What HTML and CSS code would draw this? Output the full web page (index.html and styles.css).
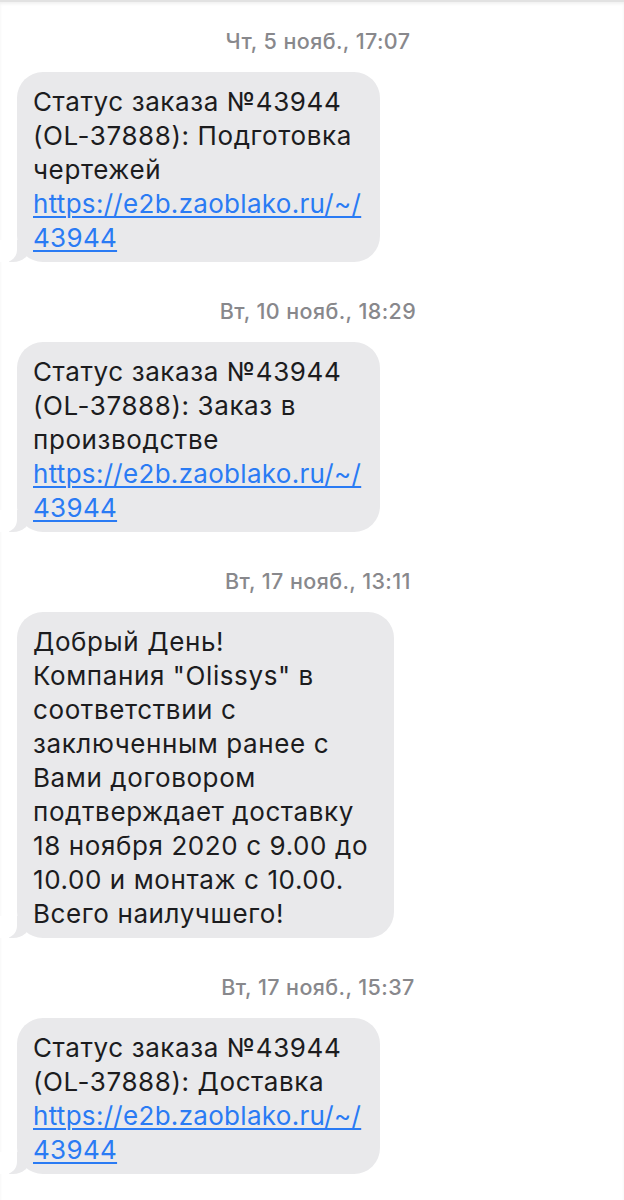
FILE: index.html
```html
<!DOCTYPE html>
<html lang='ru'>
<head>
  <meta charset='utf-8'>
  <title>Сообщения</title>

  <link rel="stylesheet" href="styles.css">
</head>
<body>
  <div id='thread'>
    <!-- 5 ноября -->
    <div class='stamp'>Чт, 5 нояб., 17:07</div>
    <div class='bubble'>
      Статус заказа №43944 (OL-37888): Подготовка чертежей
      <a href='#'>https://e2b.zaoblako.ru/~/ 43944</a>
    </div>

    <!-- 10 ноября -->
    <div class='stamp'>Вт, 10 нояб., 18:29</div>
    <div class='bubble'>
      Статус заказа №43944 (OL-37888): Заказ в производстве
      <a href='#'>https://e2b.zaoblako.ru/~/ 43944</a>
    </div>

    <!-- 17 ноября -->
    <div class='stamp'>Вт, 17 нояб., 13:11</div>
    <div class='bubble wide'>
      Добрый День!<br>
      Компания "Olissys" в соответствии с заключенным ранее с Вами договором подтверждает доставку 18 ноября 2020 с 9.00 до 10.00 и монтаж с 10.00. Всего наилучшего!
    </div>

    <div class='stamp'>Вт, 17 нояб., 15:37</div>
    <div class='bubble'>
      Статус заказа №43944 (OL-37888): Доставка
      <a href='#'>https://e2b.zaoblako.ru/~/ 43944</a>
    </div>
  </div>
</body>
</html>
```

FILE: styles.css
```css
body {
  margin: 0;
  background-color: white;
  font-family: Inter, 'Liberation Sans', sans-serif;
  border-top: 2px solid #e2e2e2;
  box-shadow: inset 0 2px 3px rgba(0, 0, 0, 0.06);
}

#thread {
  display: flex;
  flex-direction: column;
  align-items: flex-start;
  padding: 27px 5px 24px 17px;
}

.stamp {
  align-self: center;
  font-size: 21.5px;
  font-weight: 500;
  line-height: 24px;
  letter-spacing: 0.4px;
  color: #88888c;
  margin-bottom: 19px;
}

.bubble {
  position: relative;
  max-width: 333px;
  padding: 13px 14px 7px 16px;
  margin-bottom: 37px;
  background-color: #e9e9eb;
  border-radius: 26px;
  font-size: 26px;
  line-height: 34px;
  letter-spacing: 0.6px;
  color: #1c1c1e;
}

.bubble.wide {
  max-width: 345px;
  padding-right: 16px;
}

.bubble a {
  color: #2a7bf4;
  letter-spacing: 0.3px;
  text-decoration-thickness: 1.5px;
  text-underline-offset: 3px;
}

/* хвостик слева снизу */
.bubble::before,
.bubble::after {
  content: '';
  position: absolute;
  bottom: 0;
  height: 22px;
}

.bubble::before {
  left: -8px;
  width: 22px;
  background-color: #e9e9eb;
  border-bottom-right-radius: 18px 16px;
}

.bubble::after {
  left: -26px;
  width: 26px;
  background-color: white;
  border-bottom-right-radius: 12px;
}
```
